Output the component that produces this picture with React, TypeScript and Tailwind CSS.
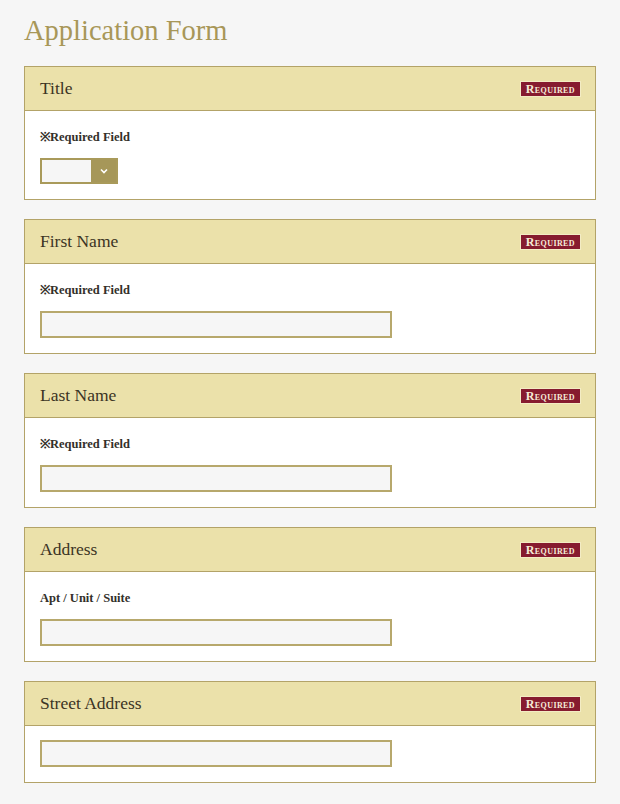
const fields = [
  { label: "Title", note: "※Required Field", kind: "select" },
  { label: "First Name", note: "※Required Field", kind: "text" },
  { label: "Last Name", note: "※Required Field", kind: "text" },
  { label: "Address", note: "Apt / Unit / Suite", kind: "text" },
  { label: "Street Address", note: "", kind: "text" },
];

const serif = "font-['Liberation_Serif','Times_New_Roman',serif]";

const Badge = () => (
  <span className="border border-[#f3ecc4] bg-[#861b2f] px-[5px] text-[12px] leading-[14px] font-bold tracking-[0.4px] text-[#f6ecd8] [font-variant:small-caps]">
    Required
  </span>
);

const Select = () => (
  <div className="flex h-[26px] w-[78px] border-2 border-[#a99a5a] bg-[#f6f6f6]">
    <div className="flex-1" />
    <div className="flex w-[25px] items-center justify-center bg-[#a69759]">
      <svg width="8" height="6" viewBox="0 0 8 6">
        <path d="M1 1.5 L4 4.5 L7 1.5" fill="none" stroke="#fff" strokeWidth="1.6" />
      </svg>
    </div>
  </div>
);

export default function App() {
  return (
    <div className={`min-h-[804px] bg-[#f6f6f6] px-6 pt-[13px] pb-5 ${serif}`}>
      <h1 className="mb-[17px] text-[28.5px] leading-[36px] text-[#a89758]">
        Application Form
      </h1>
      <div className="flex flex-col gap-[19px]">
        {fields.map((f) => (
          <section key={f.label} className="border border-[#b3a368] bg-white">
            <div className="flex h-[44px] items-center justify-between border-b border-[#b3a368] bg-[#ebe1aa] pr-[14px] pl-[15px]">
              <span className="text-[17.5px] text-[#3b3424]">{f.label}</span>
              <Badge />
            </div>
            <div className="px-[15px] pt-[14px] pb-[15px]">
              {f.note && (
                <p className="mt-[3px] mb-[12px] text-[12.5px] leading-[18px] font-bold text-[#33302a]">
                  {f.note}
                </p>
              )}
              {f.kind === "select" ? (
                <Select />
              ) : (
                <div className="h-[27px] w-[352px] border-2 border-[#b7a86c] bg-[#f6f6f6]" />
              )}
            </div>
          </section>
        ))}
      </div>
    </div>
  );
}
